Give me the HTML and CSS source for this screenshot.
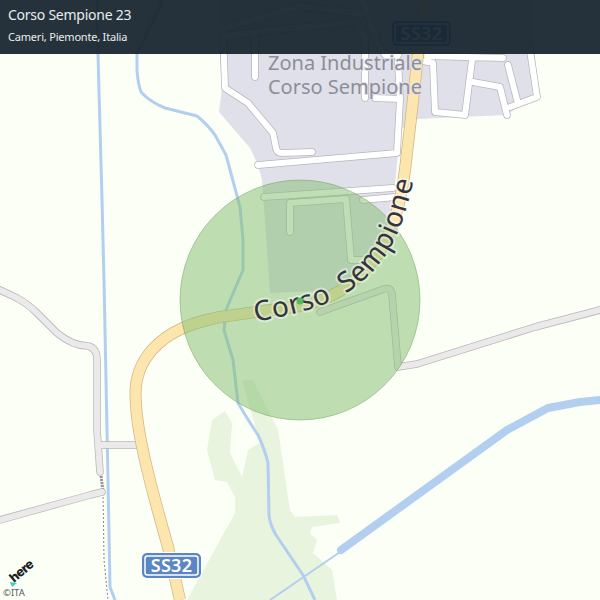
FILE: index.html
```html
<!DOCTYPE html>
<html lang="it">
<head>
    <meta charset="UTF-8">
    <meta name="viewport" content="width=device-width, initial-scale=1.0">
    <title>Corso Sempione 23</title>
    <link rel="stylesheet" href="styles.css">
</head>
<body>
    <div class="map">
        <svg class="map-canvas" width="600" height="600" viewBox="0 0 600 600">
            <defs>
                <path id="street-label" d="M256 322 C 282 316 312 312 338 298 C 370 281 392 252 402 222 C 408 204 413 185 418 160"/>
                <path id="zone-west" d="M223 30 L225 88 L248 103 L273 133 L276 148 Q277 153 282 153 L312 152"/>
                <path id="zone-south" d="M258 165 L397 153 L400 100 L398 60 M375 98 L400 99 M365 40 L365 98 M255 32 L255 77 M225 36 L255 32 L356 22 L364 36 M212 32 L300 6 L362 14"/>
                <path id="zone-inner" d="M264 197 L393 188 M290 232 L290 203 L346 199 L351 260 L372 260 M363 200 L395 197"/>
                <path id="zone-east" d="M362 0 L378 43 L385 55 L398 55 M418 60 L433 63 L435 112 L465 115 L472 60 M473 82 L500 87 L507 115 M510 107 L537 97 L530 50 M508 65 L517 100 M427 56 L503 58"/>
                <path id="road-east" d="M320 312 L384 289 Q391 287 392 294 L398 367 L417 364 L535 327 L600 310"/>
                <path id="road-west" d="M0 290 L17 298 Q28 304 37 313 L57 333 C 68 342 78 346 88 346 Q97 348 97 360 L97 430 L100 472 M100 445 L137 445 M0 520 L90 495 L102 492"/>
                <path id="main-road" d="M425 0 L418 54 L411 118 L405 170 C 400 210 390 240 372 262 C 352 287 330 300 300 306 L220 317 C 190 323 168 332 152 350 C 138 366 134 385 136 403 C 137 430 146 470 168 547 L180 600"/>
                <path id="river-long" d="M97 0 L98 54 L102 200 L104 280 L108 480 L110 587 L115 600"/>
                <path id="river-bend" d="M163 0 L137 54 L137 70 Q138 84 141 92 Q150 102 165 108 L197 116 Q207 124 215 135 L226 155 L240 207 L243 240 L243 270 L226 310 L224 330 L233 360 L238 403 Q248 420 258 435 Q265 450 268 463 L269 515 Q270 525 276 535 L303 575 L315 600"/>
            </defs>

            <rect class="ground" width="600" height="600"/>

            <polygon class="land-zone" points="222,0 220,54 222,88 219,112 250,148 258,165 262,180 270,293 337,290 390,240 400,130 418,119 506,115 538,95 530,0"/>
            <polygon class="land-wood" points="242,380 253,380 278,430 290,510 295,517 337,515 340,523 312,527 310,533 317,540 313,553 332,570 337,600 187,600 235,513 235,497 227,482 215,480 207,450 212,420 225,411 232,423 230,453 242,477 248,450 260,443"/>

            <use href="#river-long" class="river"/>
            <use href="#river-bend" class="river"/>
            <path class="canal-thin" d="M340 552 L270 600"/>
            <path class="canal" d="M341 550 L507 430 L548 408 L580 402 L600 400"/>

            <path class="path-wide" d="M101 476 L103 491"/>
            <path class="path-thin" d="M103 493 L104 560 L108 600"/>

            <use href="#road-west" class="road-case"/>
            <use href="#road-east" class="road-case"/>
            <use href="#road-west" class="road-minor"/>
            <use href="#road-east" class="road-minor"/>

            <g class="zone-roads">
                <use href="#zone-west" class="road-case"/>
                <use href="#zone-south" class="road-case"/>
                <use href="#zone-inner" class="road-case"/>
                <use href="#zone-east" class="road-case"/>
                <use href="#zone-west" class="road-white"/>
                <use href="#zone-south" class="road-white"/>
                <use href="#zone-inner" class="road-white"/>
                <use href="#zone-east" class="road-white"/>
            </g>

            <use href="#main-road" class="highway-case"/>
            <use href="#main-road" class="highway"/>

            <text class="zone-label" x="345" y="70">Zona Industriale</text>
            <text class="zone-label" x="345" y="94">Corso Sempione</text>

            <g class="shield">
                <rect class="shield-halo" x="391" y="20" width="61" height="27" rx="6"/>
                <rect class="shield-plate" x="392" y="21" width="59" height="25" rx="5"/>
                <rect class="shield-line" x="395" y="24" width="53" height="19" rx="2.5"/>
                <text class="shield-text" x="421.500" y="40">SS32</text>
            </g>
            <g class="shield">
                <rect class="shield-halo" x="141" y="552" width="61" height="27" rx="6"/>
                <rect class="shield-plate" x="142" y="553" width="59" height="25" rx="5"/>
                <rect class="shield-line" x="145" y="556" width="53" height="19" rx="2.5"/>
                <text class="shield-text" x="171.500" y="572">SS32</text>
            </g>

            <circle class="accuracy" cx="300" cy="300" r="120"/>

            <text class="street-label"><textPath href="#street-label">Corso Sempione</textPath></text>

            <circle class="position" cx="300" cy="301" r="3.500"/>

            <polygon class="logo-mark" points="10,582 17,583 12,587"/>
            <text class="logo-text" transform="translate(14 583) rotate(-40)">here</text>
        </svg>

        <header class="place-bar">
            <h1 class="place-name">Corso Sempione 23</h1>
            <p class="place-area">Cameri, Piemonte, Italia</p>
        </header>

        <div class="copyright">©ITA</div>
    </div>
</body>
</html>
```

FILE: styles.css
```css
:root {
    --color-ground: #fbfff6;
    --color-zone: #e0e0ea;
    --color-wood: #e9f4df;
    --color-water: #b3cff0;
    --color-shield: #5b86c5;
}

* {
    box-sizing: border-box;
    margin: 0;
    padding: 0;
}

body {
    font-family: "Noto Sans", "Open Sans", sans-serif;
    background-color: var(--color-ground);
}

.map {
    position: relative;
    width: 600px;
    height: 600px;
    overflow: hidden;
}

.map-canvas {
    display: block;
}

.place-bar {
    position: absolute;
    top: 0;
    left: 0;
    right: 0;
    height: 54px;
    padding: 5px 8px 0;
    background-color: rgba(22, 34, 44, 0.93);
    color: #e9edef;
}

.place-name {
    font-size: 14px;
    font-weight: 400;
    line-height: 20px;
    letter-spacing: -0.25px;
}

.place-area {
    margin-top: 4px;
    font-size: 11px;
    line-height: 16px;
    letter-spacing: -0.2px;
}

.copyright {
    position: absolute;
    left: 3px;
    bottom: 2px;
    font-size: 9.500px;
    line-height: 11px;
    color: #555b5e;
}

/* map layers */
.ground {
    fill: var(--color-ground);
}

.land-zone {
    fill: var(--color-zone);
}

.land-wood {
    fill: var(--color-wood);
}

.river {
    fill: none;
    stroke: var(--color-water);
    stroke-width: 3;
    stroke-linejoin: round;
}

.canal {
    fill: none;
    stroke: var(--color-water);
    stroke-width: 8;
    stroke-linecap: round;
    stroke-linejoin: round;
}

.canal-thin {
    fill: none;
    stroke: var(--color-water);
    stroke-width: 2;
}

.path-wide {
    fill: none;
    stroke: #8f9192;
    stroke-width: 3;
    stroke-dasharray: 2 1;
}

.path-thin {
    fill: none;
    stroke: #85878a;
    stroke-width: 1;
    stroke-dasharray: 2 2;
}

.road-case,
.road-minor,
.road-white {
    fill: none;
    stroke-linecap: round;
    stroke-linejoin: round;
}

.road-case {
    stroke: #b7b7ba;
    stroke-width: 7.5;
}

.road-minor {
    stroke: #ebe9ea;
    stroke-width: 6;
}

.road-white {
    stroke: #ffffff;
    stroke-width: 6;
}

.highway-case,
.highway {
    fill: none;
    stroke-linejoin: round;
}

.highway-case {
    stroke: #d3b583;
    stroke-width: 12;
}

.highway {
    stroke: #fde5ae;
    stroke-width: 10.5;
}

.zone-label {
    font-size: 20px;
    text-anchor: middle;
    fill: #8d8e97;
    stroke: var(--color-zone);
    stroke-width: 2;
    paint-order: stroke;
}

.shield-halo {
    fill: #ffffff;
}

.shield-plate {
    fill: var(--color-shield);
}

.shield-line {
    fill: var(--color-shield);
    stroke: #ffffff;
    stroke-width: 1.500;
}

.shield-text {
    font-family: "Noto Sans", sans-serif;
    font-size: 18px;
    font-weight: 600;
    letter-spacing: 0.3px;
    text-anchor: middle;
    fill: #ffffff;
}

.accuracy {
    fill: rgba(130, 190, 110, 0.5);
    stroke: rgba(90, 140, 70, 0.4);
    stroke-width: 1;
}

.street-label {
    font-size: 28px;
    letter-spacing: 0.6px;
    word-spacing: 7px;
    fill: #33343f;
    stroke: rgba(255, 255, 255, 0.45);
    stroke-width: 4;
    stroke-linejoin: round;
    paint-order: stroke;
}

.position {
    fill: #5cb85c;
}

.logo-mark {
    fill: #3fd0b5;
}

.logo-text {
    font-family: "Inter", sans-serif;
    font-size: 13px;
    font-weight: 800;
    letter-spacing: -0.6px;
    fill: #1a2026;
}
```
